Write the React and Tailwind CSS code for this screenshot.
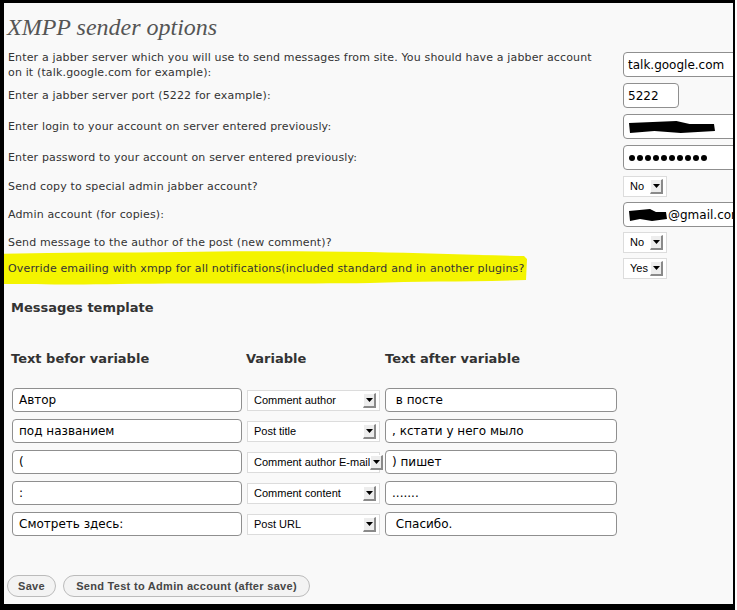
import React from 'react';

const SANS = "font-['DejaVu_Sans',sans-serif]";
const ARIAL = "font-['Liberation_Sans',Arial,sans-serif]";

const Arrow = () => (
  <div className="flex h-[15px] w-[13px] shrink-0 items-center justify-center border-t border-l border-r-2 border-b-2 border-t-white border-l-white border-r-[#8a8a8a] border-b-[#8a8a8a] bg-[#ededed]">
    <svg width="7" height="4" viewBox="0 0 7 4">
      <path d="M0 0h7L3.5 4z" fill="#000" />
    </svg>
  </div>
);

const Select = ({ value, className }) => (
  <div className={`flex items-center justify-between border border-[#dcdcdc] bg-white pl-[6px] pr-[3px] text-[11px] text-black ${ARIAL} ${className}`}>
    <span className="whitespace-nowrap">{value}</span>
    <Arrow />
  </div>
);

const TextBox = ({ children, className, short }) => (
  <div className={`flex ${short ? 'h-[24px] pl-[6px]' : 'h-[25px] pl-[4px]'} shrink-0 items-center overflow-hidden rounded-[4px] border border-[#8f8f8f] bg-white text-[12px] text-black whitespace-pre ${SANS} ${className || ''}`}>
    {children}
  </div>
);

const Scribble = ({ width }) => (
  <svg width={width} height="16" viewBox={`0 0 ${width} 16`} className="shrink-0">
    <path
      d={`M1 4 L${width * 0.55} 2 L${width * 0.7} 5 L${width - 2} 5 L${width - 1} 12 L${width * 0.6} 14 L${width * 0.3} 12 L2 14 Z`}
      fill="#000"
    />
  </svg>
);

const Dots = () => (
  <div className="flex gap-[2px] pl-[1px]">
    {Array.from({ length: 10 }).map((_, i) => (
      <div key={i} className="h-[6px] w-[6px] rounded-full bg-black" />
    ))}
  </div>
);

const options = [
  { label: 'Enter a jabber server which you will use to send messages from site. You should have a jabber account on it (talk.google.com for example):', h: 'h-[31px]', control: <TextBox className="w-[160px]">talk.google.com</TextBox> },
  { label: 'Enter a jabber server port (5222 for example):', h: 'h-[31px]', control: <TextBox className="w-[56px]">5222</TextBox> },
  { label: 'Enter login to your account on server entered previously:', h: 'h-[31px]', control: <TextBox className="w-[160px]"><Scribble width={88} /></TextBox> },
  { label: 'Enter password to your account on server entered previously:', h: 'h-[31px]', control: <TextBox className="w-[160px]"><Dots /></TextBox> },
  { label: 'Send copy to special admin jabber account?', h: 'h-[26px]', control: <Select value="No" className="h-[21px] w-[44px]" /> },
  { label: 'Admin account (for copies):', h: 'h-[31px]', control: <TextBox className="w-[160px]"><Scribble width={40} />@gmail.com</TextBox> },
  { label: 'Send message to the author of the post (new comment)?', h: 'h-[25px]', control: <Select value="No" className="h-[21px] w-[44px]" /> },
  { label: 'Override emailing with xmpp for all notifications(included standard and in another plugins?', h: 'h-[27px]', control: <Select value="Yes" className="h-[21px] w-[44px]" />, marked: true },
];

const templates = [
  ['Автор', 'Comment author', ' в посте'],
  ['под названием', 'Post title', ', кстати у него мыло'],
  ['(', 'Comment author E-mail', ') пишет'],
  [':', 'Comment content', '.......'],
  ['Смотреть здесь:', 'Post URL', ' Спасибо.'],
];

const App = () => {
  return (
    <div className="h-[610px] w-[737px] overflow-hidden bg-white">
      <div className="flex h-[610px] w-[735px] bg-black pl-[4px] pt-[3px] pr-[2px] pb-[6px]">
        <div className="h-[601px] w-[729px] overflow-hidden bg-[#f9f9f9]">
          {/* title */}
          <div className="h-[46px] pl-[3px] pt-[9px]">
            <h1 className="text-[24px] leading-[30px] italic text-[#555] font-['Liberation_Serif',serif]">
              XMPP sender options
            </h1>
          </div>

          {/* options */}
          <div className="flex flex-col">
            {options.map((o, i) => (
              <div key={i} className={`flex items-center ${o.h}`}>
                <div className={`relative w-[619px] shrink-0 pl-[4px] pr-[14px] text-[11px] leading-[15px] tracking-[0.15px] text-[#333] ${SANS}`}>
                  {o.marked && (
                    <svg className="absolute left-[-4px] top-[-11px]" width="530" height="37" viewBox="0 0 530 37">
                      <path
                        d="M0 4 C60 2 120 3 180 2 C240 1 300 1 370 2 C420 3 470 5 524 6 L527 9 L526 30 C470 32 420 31 370 33 C300 34 200 33 120 34 C70 35 30 34 0 34 Z"
                        fill="#f4f400"
                      />
                    </svg>
                  )}
                  <span className="relative">{o.label}</span>
                </div>
                {o.control}
              </div>
            ))}
          </div>

          {/* messages template */}
          <div className={`mt-[17px] pl-[7px] text-[13px] font-bold leading-[18px] text-[#333] ${SANS}`}>
            Messages template
          </div>

          <div className="mt-[33px] grid grid-cols-[230px_133px_232px] gap-x-[5px] pl-[8px]">
            <div className={`-ml-[1px] text-[13px] font-bold leading-[18px] text-[#333] ${SANS}`}>Text befor variable</div>
            <div className={`-ml-[1px] text-[13px] font-bold leading-[18px] text-[#333] ${SANS}`}>Variable</div>
            <div className={`text-[13px] font-bold leading-[18px] text-[#333] ${SANS}`}>Text after variable</div>
          </div>

          <div className="mt-[20px] flex flex-col gap-[7px] pl-[8px]">
            {templates.map((t, i) => (
              <div key={i} className="grid grid-cols-[230px_133px_232px] items-center gap-x-[5px]">
                <TextBox short>{t[0]}</TextBox>
                <Select value={t[1]} className="h-[21px]" />
                <TextBox short>{t[2]}</TextBox>
              </div>
            ))}
          </div>

          {/* buttons */}
          <div className={`ml-[3px] mt-[39px] flex gap-[7px] text-[11px] font-bold tracking-[0.3px] text-[#464646] ${ARIAL}`}>
            <button className="h-[22px] w-[49px] rounded-full border border-[#bbb] bg-[#f3f3f3]">Save</button>
            <button className="h-[22px] w-[247px] rounded-full border border-[#bbb] bg-[#f3f3f3]">
              Send Test to Admin account (after save)
            </button>
          </div>
        </div>
      </div>
    </div>
  );
};

export default App;
